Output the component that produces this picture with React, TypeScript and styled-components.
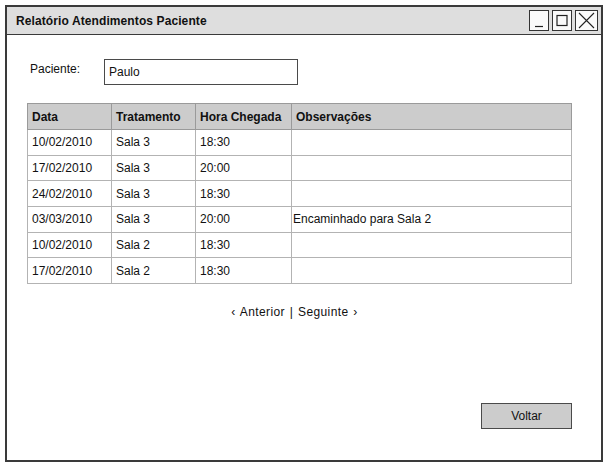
import styled, { createGlobalStyle } from "styled-components";

type Visit = {
	date: string;
	room: string;
	arrival: string;
	notes: string;
};

const visits: Visit[] = [
	{ date: "10/02/2010", room: "Sala 3", arrival: "18:30", notes: "" },
	{ date: "17/02/2010", room: "Sala 3", arrival: "20:00", notes: "" },
	{ date: "24/02/2010", room: "Sala 3", arrival: "18:30", notes: "" },
	{ date: "03/03/2010", room: "Sala 3", arrival: "20:00", notes: "Encaminhado para Sala 2" },
	{ date: "10/02/2010", room: "Sala 2", arrival: "18:30", notes: "" },
	{ date: "17/02/2010", room: "Sala 2", arrival: "18:30", notes: "" },
];

export default function App() {
	return (
		<>
			<GlobalStyle />
			<Window>
				<TitleBar>
					<Title>Relatório Atendimentos Paciente</Title>
					<WindowControls>
						<ControlButton aria-label="minimizar">
							<svg width="18" height="19" viewBox="0 0 18 19">
								<path d="M5 15.5h8" stroke="#222" strokeWidth="1.2" />
							</svg>
						</ControlButton>
						<ControlButton aria-label="maximizar">
							<svg width="18" height="19" viewBox="0 0 18 19">
								<rect x="4" y="4.5" width="10" height="10" fill="none" stroke="#222" strokeWidth="1.2" />
							</svg>
						</ControlButton>
						<ControlButton $wide aria-label="fechar">
							<svg width="21" height="19" viewBox="0 0 21 19">
								<path d="M3 2l15 15M18 2L3 17" stroke="#222" strokeWidth="1.1" />
							</svg>
						</ControlButton>
					</WindowControls>
				</TitleBar>

				<Body>
					<PatientRow>
						<Label>Paciente:</Label>
						<TextField>Paulo</TextField>
					</PatientRow>

					<Table>
						<colgroup>
							<col style={{ width: 84 }} />
							<col style={{ width: 84 }} />
							<col style={{ width: 96 }} />
							<col />
						</colgroup>
						<thead>
							<tr>
								<HeadCell>Data</HeadCell>
								<HeadCell>Tratamento</HeadCell>
								<HeadCell>Hora Chegada</HeadCell>
								<HeadCell>Observações</HeadCell>
							</tr>
						</thead>
						<tbody>
							{visits.map((v, i) => (
								<Row key={i}>
									<Cell>{v.date}</Cell>
									<Cell>{v.room}</Cell>
									<Cell>{v.arrival}</Cell>
									<Cell $tight>{v.notes}</Cell>
								</Row>
							))}
						</tbody>
					</Table>

					<Pager>‹ Anterior | Seguinte ›</Pager>

					<Footer>
						<Button>Voltar</Button>
					</Footer>
				</Body>
			</Window>
		</>
	);
}

const GlobalStyle = createGlobalStyle`
	html, body {
		margin: 0;
		padding: 0;
		background: #fff;
	}
	body {
		font-family: "Liberation Sans", Arial, sans-serif;
		font-size: 12px;
		color: #111;
	}
`;

const Window = styled.div`
	margin: 5px 0 0 5px;
	width: 598px;
	height: 457px;
	box-sizing: border-box;
	border: 2px solid #3a3a3a;
	display: flex;
	flex-direction: column;
	background: #fff;
`;

const TitleBar = styled.div`
	height: 27px;
	flex: none;
	display: flex;
	align-items: center;
	justify-content: space-between;
	background: #dedede;
	border-bottom: 1.5px solid #3a3a3a;
	padding: 0 3px 0 9px;
`;

const Title = styled.span`
	font-weight: bold;
	font-size: 12px;
	color: #111;
	letter-spacing: 0.1px;
`;

const WindowControls = styled.div`
	display: flex;
	gap: 3px;
	align-items: center;
`;

const ControlButton = styled.div<{ $wide?: boolean }>`
	width: ${(p) => (p.$wide ? 21 : 18)}px;
	height: 19px;
	border: 1.2px solid #333;
	background: #fafafa;
	display: flex;
	svg {
		display: block;
	}
`;

const Body = styled.div`
	flex: 1;
	display: flex;
	flex-direction: column;
	padding: 0 29px 31px 20px;
`;

const PatientRow = styled.div`
	display: flex;
	align-items: flex-start;
	margin-top: 24px;
	height: 26px;
`;

const Label = styled.span`
	box-sizing: border-box;
	width: 77px;
	padding-left: 3px;
	padding-top: 3px;
`;

const TextField = styled.div`
	width: 194px;
	height: 26px;
	box-sizing: border-box;
	border: 1.5px solid #4a4a4a;
	padding: 5px 4px 0;
`;

const Table = styled.table`
	margin-top: 18px;
	width: 545px;
	border-collapse: collapse;
	table-layout: fixed;
	border: 1px solid #9a9a9a;
`;

const HeadCell = styled.th`
	height: 26px;
	box-sizing: border-box;
	background: #cccccc;
	border: 1px solid #9a9a9a;
	text-align: left;
	font-weight: bold;
	padding: 0 4px;
`;

const Row = styled.tr`
	height: 25.67px;
`;

const Cell = styled.td<{ $tight?: boolean }>`
	border: 1px solid #b3b3b3;
	padding: 0 ${(p) => (p.$tight ? 1 : 4)}px;
	white-space: nowrap;
`;

const Pager = styled.div`
	margin-top: 20px;
	text-align: center;
	line-height: 16px;
	padding-right: 10px;
	letter-spacing: 0.4px;
	word-spacing: 1px;
`;

const Footer = styled.div`
	margin-top: auto;
	display: flex;
	justify-content: flex-end;
`;

const Button = styled.div`
	width: 91px;
	height: 26px;
	box-sizing: border-box;
	background: #cccccc;
	border: 1.5px solid #4a4a4a;
	display: flex;
	align-items: center;
	justify-content: center;
`;
